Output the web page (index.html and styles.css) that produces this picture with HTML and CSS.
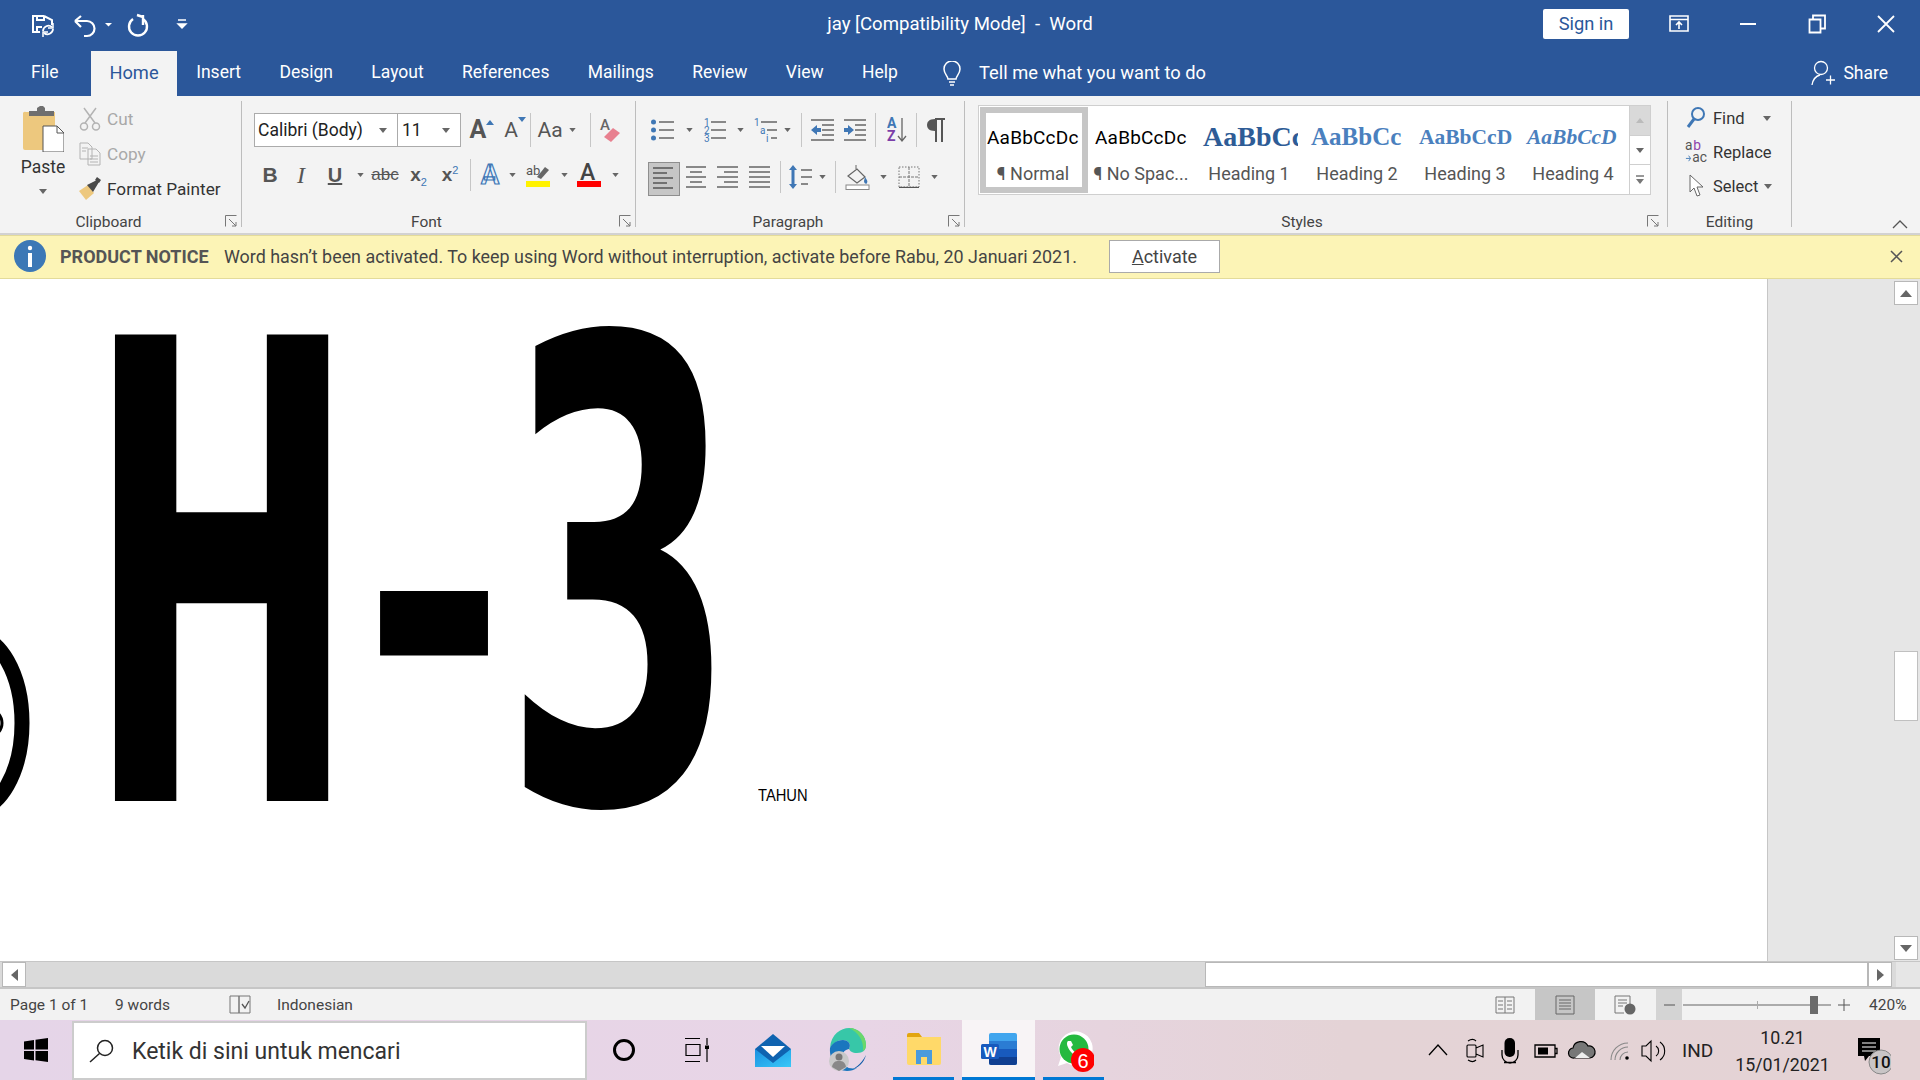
FILE: index.html
```html
<!DOCTYPE html>
<html lang="en">
<head>
<meta charset="utf-8">
<title>jay [Compatibility Mode] - Word</title>
<link rel="stylesheet" href="styles.css">
</head>
<body>
<div class="app">
  <header class="titlebar">
    <svg class="qat" width="200" height="48" viewBox="0 0 200 48" fill="none" stroke="#fff" stroke-width="2">
      <path d="M44 16H33v16h7M44 16l8 4v5M37 32v-5h5M37 16v4h7v-4"/>
      <path d="M43 31a5.500 5.500 0 0 1 9-4M53 29a5.500 5.500 0 0 1-9 4" stroke-width="1.800"/>
      <path d="M53 23v5h-5M43 37v-5h5" stroke-width="1.500"/>
      <path d="M75 21l6-5M75 21l6 6M75 21h12a7.500 7.500 0 0 1 0 15h-3" stroke-width="2.200"/>
      <path d="M105 23h7l-3.500 3.500z" fill="#fff" stroke="none"/>
      <path d="M133 19a9 9 0 1 0 10 0" stroke-width="2.400"/>
      <path d="M143 15v10M143 17l-6-2" stroke-width="2.400"/>
      <path d="M178 20h8M178 24h8l-4 4z" fill="#fff" stroke-width="1.400"/>
    </svg>
    <div class="doc-title">jay [Compatibility Mode]&nbsp; -&nbsp; Word</div>
    <div class="win-controls">
      <button class="signin">Sign in</button>
      <span class="win-btn"><svg width="22" height="20" viewBox="0 0 22 20" fill="none" stroke="#fff" stroke-width="1.600"><path d="M2 2h18v15H2zM2 5.500h18M11 15V8M8 11l3-3 3 3"/></svg></span>
      <span class="win-btn"><svg width="16" height="4" viewBox="0 0 16 4"><path d="M0 2h16" stroke="#fff" stroke-width="2"/></svg></span>
      <span class="win-btn"><svg width="18" height="20" viewBox="0 0 18 20" fill="none" stroke="#fff" stroke-width="1.800"><path d="M1.500 5.500h11v13h-11zM5 5V1.500h12v13h-4"/></svg></span>
      <span class="win-btn"><svg width="18" height="18" viewBox="0 0 18 18" stroke="#fff" stroke-width="1.800"><path d="M1 1l16 16M17 1L1 17"/></svg></span>
    </div>
  </header>

  <nav class="tabs">
    <span class="tab tab-file">File</span>
    <span class="tab active">Home</span>
    <span class="tab">Insert</span>
    <span class="tab">Design</span>
    <span class="tab">Layout</span>
    <span class="tab">References</span>
    <span class="tab">Mailings</span>
    <span class="tab">Review</span>
    <span class="tab">View</span>
    <span class="tab">Help</span>
    <svg class="bulb" width="20" height="26" viewBox="0 0 20 26" fill="none" stroke="#fff" stroke-width="1.500"><path d="M6 18c0-3-4-5-4-10a8 8 0 0 1 16 0c0 5-4 7-4 10zM7 21h6M8 24h4"/></svg>
    <span class="tellme">Tell me what you want to do</span>
    <span class="share">
      <svg width="24" height="26" viewBox="0 0 24 26" fill="none" stroke="#fff" stroke-width="1.300"><circle cx="10" cy="8" r="6.500"/><path d="M1 25c1-6 4-9 8-10M15 20h9M19.500 15.500v9"/></svg>
      Share
    </span>
  </nav>

  <section class="ribbon">
    <div class="group g-clip">
      <div class="g-body clip-body">
        <div class="paste">
          <svg width="41" height="46" viewBox="0 0 41 46"><path d="M3 6h29v38H2a2 2 0 0 1-2-2V8a2 2 0 0 1 3-2z" fill="#EDC87E"/><path d="M6 5h8V2l3-2h3l2 2v3h9v5H6z" fill="#6f6f6f"/><path d="M20 20h14l7 7v19H20z" fill="#fff" stroke="#555" stroke-width="1"/><path d="M34 20v7h7" fill="none" stroke="#555"/></svg>
          <span class="paste-label">Paste</span>
          <svg class="caret paste-caret" width="8" height="5" viewBox="0 0 8 5"><path d="M0 0h8L4 5z"/></svg>
        </div>
        <div class="clip-cmds">
          <div class="cmd disabled"><svg width="22" height="24" viewBox="0 0 22 24" fill="none" stroke="#b3b3b3" stroke-width="1.500"><path d="M5 1l11 15M17 1L6 16"/><circle cx="5" cy="19.500" r="3.500"/><circle cx="17" cy="19.500" r="3.500"/></svg><span>Cut</span></div>
          <div class="cmd disabled"><svg width="22" height="24" viewBox="0 0 22 24" fill="none" stroke="#b3b3b3" stroke-width="1"><path d="M1 1h8l4 4v12H1zM9 7h8l4 4v12H9zM3 6h6M3 9h4M11 14h8M11 17h8M11 20h8"/></svg><span>Copy</span></div>
          <div class="cmd"><svg width="24" height="24" viewBox="0 0 24 24"><path d="M1 14l9-6 6 8-8 7z" fill="#EDC87E"/><path d="M9 8l10-5 2 2-6 10z" fill="#4a4a4a"/><path d="M19 0l4 3-2 3-4-3z" fill="#4a4a4a"/></svg><span>Format Painter</span></div>
        </div>
      </div>
      <div class="g-label lab-clip"><span>Clipboard</span><svg class="launcher" width="12" height="12" viewBox="0 0 12 12" fill="none" stroke="#777"><path d="M.5 11.500v-11h11M4 4l7 7M11 7v4H7"/></svg></div>
    </div>

    <div class="group g-font">
      <div class="g-body">
        <div class="font-row1">
          <div class="combo combo-name"><span>Calibri (Body)</span><svg class="caret" width="8" height="5" viewBox="0 0 8 5"><path d="M0 0h8L4 5z"/></svg></div>
          <div class="combo combo-size"><span>11</span><svg class="caret" width="8" height="5" viewBox="0 0 8 5"><path d="M0 0h8L4 5z"/></svg></div>
          <div class="font-tools1">
            <span class="glyph sup-a big">A<svg class="sub-caret" width="8" height="5" viewBox="0 0 8 5"><path d="M0 5h8L4 0z"/></svg></span>
            <span class="glyph sup-a">A<svg class="sub-caret" width="8" height="5" viewBox="0 0 8 5"><path d="M0 0h8L4 5z"/></svg></span>
            <i class="vsep"></i>
            <span class="glyph aa">Aa</span>
            <svg class="caret" width="7" height="4" viewBox="0 0 8 5"><path d="M0 0h8L4 5z"/></svg>
            <i class="vsep sep-end"></i>
            <svg width="22" height="26" viewBox="0 0 22 26"><text class="svg-a" x="1" y="13">A</text><path d="M5 20l9-9 7 5-9 9z" fill="#E8808F"/></svg>
          </div>
        </div>
        <div class="font-row2">
          <b class="fmt">B</b>
          <i class="fmt ital">I</i>
          <u class="fmt ul">U</u>
          <svg class="caret" width="7" height="4" viewBox="0 0 8 5"><path d="M0 0h8L4 5z"/></svg>
          <s class="fmt abc">abc</s>
          <span class="fmt xs">x<sub>2</sub></span>
          <span class="fmt xs">x<sup>2</sup></span>
          <i class="vsep short"></i>
          <span class="fx-a">A</span>
          <svg class="caret" width="7" height="4" viewBox="0 0 8 5"><path d="M0 0h8L4 5z"/></svg>
          <svg width="24" height="24" viewBox="0 0 24 24"><text class="svg-ab" x="0" y="12">ab</text><path d="M11 14l8-10 4 3-8 9z" fill="#666"/><rect y="18" width="24" height="6" fill="#FFF200"/></svg>
          <svg class="caret" width="7" height="4" viewBox="0 0 8 5"><path d="M0 0h8L4 5z"/></svg>
          <svg width="24" height="24" viewBox="0 0 24 24"><text class="svg-bigA" x="3" y="17">A</text><rect y="18" width="24" height="6" fill="#F00"/></svg>
          <svg class="caret" width="7" height="4" viewBox="0 0 8 5"><path d="M0 0h8L4 5z"/></svg>
        </div>
      </div>
      <div class="g-label lab-font"><span>Font</span><svg class="launcher" width="12" height="12" viewBox="0 0 12 12" fill="none" stroke="#777"><path d="M.5 11.500v-11h11M4 4l7 7M11 7v4H7"/></svg></div>
    </div>

    <div class="group g-para">
      <div class="g-body">
        <div class="para-row1">
          <svg width="24" height="22" viewBox="0 0 24 22"><g fill="#3F77B5"><circle cx="2.500" cy="3" r="2.500"/><circle cx="2.500" cy="11" r="2.500"/><circle cx="2.500" cy="19" r="2.500"/></g><path d="M8 3h15M8 11h15M8 19h15" stroke="#666" stroke-width="1.300"/></svg>
          <svg class="caret" width="7" height="4" viewBox="0 0 8 5"><path d="M0 0h8L4 5z"/></svg>
          <svg width="24" height="24" viewBox="0 0 24 24"><text class="svg-num" x="1" y="8">1</text><text class="svg-num" x="1" y="16">2</text><text class="svg-num" x="1" y="24">3</text><path d="M8 4h15M8 12h15M8 20h15" stroke="#666" stroke-width="1.300"/></svg>
          <svg class="caret" width="7" height="4" viewBox="0 0 8 5"><path d="M0 0h8L4 5z"/></svg>
          <svg width="24" height="24" viewBox="0 0 24 24"><text class="svg-num" x="0" y="8">1</text><text class="svg-num" x="6" y="16">a</text><text class="svg-num" x="12" y="24">i</text><path d="M7 4h16M13 12h10M17 20h6" stroke="#666" stroke-width="1.300"/></svg>
          <svg class="caret" width="7" height="4" viewBox="0 0 8 5"><path d="M0 0h8L4 5z"/></svg>
          <i class="vsep"></i>
          <svg width="23" height="22" viewBox="0 0 23 22"><path d="M0 1h23M11 6h12M11 11h12M11 16h12M0 21h23" stroke="#666" stroke-width="1.300"/><path d="M0 11l6-5v3h4v4H6v3z" fill="#3F77B5"/></svg>
          <span></span>
          <svg width="22" height="22" viewBox="0 0 22 22"><path d="M0 1h22M11 6h11M11 11h11M11 16h11M0 21h22" stroke="#666" stroke-width="1.300"/><path d="M10 11L4 6v3H0v4h4v3z" fill="#3F77B5"/></svg>
          <i class="vsep"></i>
          <svg width="20" height="26" viewBox="0 0 20 26"><text class="svg-az1" x="0" y="11">A</text><text class="svg-az2" x="0" y="24">Z</text><path d="M15 1v22M11 19l4 5 4-5" fill="none" stroke="#666" stroke-width="1.300"/></svg>
          <i class="vsep"></i>
          <svg width="18" height="24" viewBox="0 0 18 24"><path d="M8 1C2 1 0 4 0 7s2 6 8 6V1z" fill="#555"/><path d="M8 1h10M9 1v23M15 1v23" stroke="#555" stroke-width="2" fill="none"/></svg>
        </div>
        <div class="para-row2">
          <span class="align-on"><svg width="22" height="22" viewBox="0 0 22 22"><path d="M0 1h20M0 6h14M0 11h20M0 16h14M0 21h20" stroke="#555" stroke-width="1.300"/></svg></span>
          <svg width="20" height="22" viewBox="0 0 20 22"><path d="M0 1h20M4 6h12M0 11h20M4 16h12M0 21h20" stroke="#666" stroke-width="1.300"/></svg>
          <svg width="21" height="22" viewBox="0 0 21 22"><path d="M0 1h21M7 6h14M0 11h21M7 16h14M0 21h21" stroke="#666" stroke-width="1.300"/></svg>
          <svg width="21" height="22" viewBox="0 0 21 22"><path d="M0 1h21M0 6h21M0 11h21M0 16h21M0 21h21" stroke="#666" stroke-width="1.300"/></svg>
          <i class="vsep short"></i>
          <svg width="23" height="26" viewBox="0 0 23 26"><path d="M4 1l4 5H5.500v14H8l-4 5-4-5h2.500V6H0z" fill="#3F77B5"/><path d="M12 6h11M12 13h11M12 20h7" stroke="#666" stroke-width="1.300"/></svg>
          <svg class="caret" width="7" height="4" viewBox="0 0 8 5"><path d="M0 0h8L4 5z"/></svg>
          <i class="vsep short"></i>
          <svg width="25" height="26" viewBox="0 0 25 26" fill="none"><path d="M3 12l9-7 8 8-8 6z" stroke="#666" stroke-width="1.200"/><path d="M11 5V1" stroke="#666"/><path d="M20 13c2 3 3 4 2 6s-3 0-3-2z" fill="#3F77B5"/><rect x="1" y="21" width="23" height="4.500" fill="#fff" stroke="#888"/></svg>
          <svg class="caret" width="7" height="4" viewBox="0 0 8 5"><path d="M0 0h8L4 5z"/></svg>
          <svg width="22" height="22" viewBox="0 0 22 22" fill="none" stroke="#777"><path d="M1 1h20v20H1z" stroke-dasharray="1.500 1.500"/><path d="M11 1v20M1 11h20" stroke-dasharray="3 1"/><path d="M1 21.500h20" stroke="#555" stroke-width="1.300"/></svg>
          <svg class="caret" width="7" height="4" viewBox="0 0 8 5"><path d="M0 0h8L4 5z"/></svg>
        </div>
      </div>
      <div class="g-label lab-para"><span>Paragraph</span><svg class="launcher" width="12" height="12" viewBox="0 0 12 12" fill="none" stroke="#777"><path d="M.5 11.500v-11h11M4 4l7 7M11 7v4H7"/></svg></div>
    </div>

    <div class="group g-styles">
      <div class="gallery">
        <div class="gallery-cells">
          <div class="style-cell on"><div class="pv pv-normal">AaBbCcDc</div><div class="pv-label">¶ Normal</div></div>
          <div class="style-cell"><div class="pv pv-normal">AaBbCcDc</div><div class="pv-label">¶ No Spac...</div></div>
          <div class="style-cell"><div class="pv pv-h1">AaBbCc</div><div class="pv-label">Heading 1</div></div>
          <div class="style-cell"><div class="pv pv-h2">AaBbCc</div><div class="pv-label">Heading 2</div></div>
          <div class="style-cell"><div class="pv pv-h3">AaBbCcD</div><div class="pv-label">Heading 3</div></div>
          <div class="style-cell"><div class="pv pv-h4">AaBbCcD</div><div class="pv-label">Heading 4</div></div>
        </div>
        <div class="gallery-scroll">
          <span class="gs gs-up"><svg width="8" height="5" viewBox="0 0 8 5"><path d="M0 5h8L4 0z" fill="#bbb"/></svg></span>
          <span class="gs"><svg class="caret" width="8" height="5" viewBox="0 0 8 5"><path d="M0 0h8L4 5z"/></svg></span>
          <span class="gs"><svg width="8" height="9" viewBox="0 0 8 9"><path d="M0 1h8" stroke="#777" stroke-width="1.500"/><path d="M0 4h8L4 9z" fill="#777"/></svg></span>
        </div>
      </div>
      <div class="g-label lab-styles"><span>Styles</span><svg class="launcher" width="12" height="12" viewBox="0 0 12 12" fill="none" stroke="#777"><path d="M.5 11.500v-11h11M4 4l7 7M11 7v4H7"/></svg></div>
    </div>

    <div class="group g-edit">
      <div class="g-body edit-body">
        <div class="ecmd"><svg width="20" height="24" viewBox="0 0 20 24" fill="none"><circle cx="12" cy="8" r="6" stroke="#3F77B5" stroke-width="2"/><path d="M8 13l-6 8" stroke="#3F77B5" stroke-width="3"/></svg><span>Find</span><svg class="caret find-caret" width="8" height="5" viewBox="0 0 8 5"><path d="M0 0h8L4 5z"/></svg></div>
        <div class="ecmd"><svg width="24" height="24" viewBox="0 0 24 24"><text class="svg-rep-a" x="0" y="10">a</text><text class="svg-rep-b" x="9" y="10">b</text><text class="svg-rep-a" x="8" y="23">ac</text><path d="M1 19h5M4 16l2 3-2 3" stroke="#3F77B5" fill="none"/></svg><span>Replace</span></div>
        <div class="ecmd"><svg width="20" height="24" viewBox="0 0 20 24"><path d="M4 1v17l4-4 3 8 3-1-3-8h6z" fill="#fff" stroke="#666"/></svg><span>Select</span><svg class="caret sel-caret" width="8" height="5" viewBox="0 0 8 5"><path d="M0 0h8L4 5z"/></svg></div>
      </div>
      <div class="g-label lab-edit"><span>Editing</span></div>
    </div>
    <svg class="collapse" width="16" height="10" viewBox="0 0 16 10" fill="none" stroke="#555" stroke-width="1.300"><path d="M1 9l7-7 7 7"/></svg>
  </section>

  <section class="notice">
    <svg class="info" width="32" height="32" viewBox="0 0 32 32"><circle cx="16" cy="16" r="16" fill="#3C78B6"/><circle cx="16" cy="8" r="2.200" fill="#fff"/><path d="M14 13h4v14h-4z" fill="#fff"/></svg>
    <strong>PRODUCT NOTICE</strong>
    <span class="msg">Word hasn’t been activated. To keep using Word without interruption, activate before Rabu, 20 Januari 2021.</span>
    <button class="activate"><u>A</u>ctivate</button>
    <svg class="notice-x" width="13" height="13" viewBox="0 0 13 13" stroke="#555" stroke-width="1.500"><path d="M1 1l11 11M12 1L1 12"/></svg>
  </section>

  <main class="workspace">
    <div class="page">
      <svg class="ring" width="40" height="200" viewBox="0 0 40 200" fill="none" stroke="#000"><ellipse cx="-28" cy="84" rx="50" ry="88" stroke-width="15"/><circle cx="-12" cy="84" r="14" stroke-width="3"/></svg>
      <div class="bigline">
        <span class="big big-h">H</span>
        <span class="big big-dash">-</span>
        <span class="big big-3">3</span>
        <span class="tahun">TAHUN</span>
      </div>
    </div>
    <div class="gutter"></div>
    <div class="vscroll">
      <span class="sbtn"><svg width="12" height="7" viewBox="0 0 12 7"><path d="M0 7h12L6 0z" fill="#666"/></svg></span>
      <span class="vthumb"></span>
      <span class="sbtn"><svg width="12" height="7" viewBox="0 0 12 7"><path d="M0 0h12L6 7z" fill="#666"/></svg></span>
    </div>
  </main>

  <div class="hscroll">
    <span class="hbtn"><svg width="7" height="12" viewBox="0 0 7 12"><path d="M7 0v12L0 6z" fill="#666"/></svg></span>
    <span class="hthumb"></span>
    <span class="hbtn"><svg width="7" height="12" viewBox="0 0 7 12"><path d="M0 0v12l7-6z" fill="#666"/></svg></span>
  </div>

  <footer class="status">
    <span class="st-page">Page 1 of 1</span>
    <span class="st-words">9 words</span>
    <svg class="st-proof" width="22" height="20" viewBox="0 0 22 20" fill="none" stroke="#777"><path d="M1 1h9v17H1zM10 18V1h11v17H10"/><path d="M13 9l3 4 4-7" stroke="#555" stroke-width="1.300"/></svg>
    <span class="st-lang">Indonesian</span>
    <div class="st-right">
      <span class="vw"><svg width="20" height="20" viewBox="0 0 20 20" fill="none" stroke="#777"><path d="M1 2h18v16H1zM10 2v16M3 6h5M3 10h5M3 14h5M12 6h5M12 10h5M12 14h5"/></svg></span>
      <span class="vw vw-on"><svg width="20" height="20" viewBox="0 0 20 20" fill="none" stroke="#666"><path d="M1 1h18v18H1zM4 5h12M4 8h12M4 11h12M4 14h12"/></svg></span>
      <span class="vw"><svg width="22" height="20" viewBox="0 0 22 20" fill="none" stroke="#777"><path d="M10 18H1V1h15v8M4 5h9M4 8h9M4 11h5"/><circle cx="16" cy="14" r="5.500" fill="#666" stroke="none"/></svg></span>
      <span class="zm-minus"><svg width="11" height="2" viewBox="0 0 11 2"><path d="M0 1h11" stroke="#555"/></svg></span>
      <div class="slider"><i class="tick"></i><i class="knob"></i></div>
      <svg class="zm-plus" width="12" height="12" viewBox="0 0 12 12" stroke="#555"><path d="M0 6h12M6 0v12"/></svg>
      <span class="zm-val">420%</span>
    </div>
  </footer>

  <footer class="taskbar">
    <span class="start"><svg width="24" height="24" viewBox="0 0 24 24"><path d="M0 3.500l10-1.500v9.500H0zM11.500 1.800L24 0v11.500H11.500zM0 13h10v9.500l-10-1.500zM11.500 13H24v11l-12.500-1.800z" fill="#000"/></svg></span>
    <div class="search">
      <svg width="26" height="24" viewBox="0 0 26 24" fill="none" stroke="#222" stroke-width="1.500"><circle cx="16" cy="9" r="7.500"/><path d="M10.500 14.500L1 23"/></svg>
      <span>Ketik di sini untuk mencari</span>
    </div>
    <span class="tb tb-cortana"><svg width="24" height="24" viewBox="0 0 24 24" fill="none" stroke="#000" stroke-width="3"><circle cx="12" cy="12" r="9.500"/></svg></span>
    <span class="tb tb-task"><svg width="24" height="24" viewBox="0 0 24 24" fill="none" stroke="#000" stroke-width="1.200"><path d="M0 .5h15M1 6.500h14v11H1zM0 23.500h15M22 0v7M22 11v13"/><rect x="20" y="7.500" width="4" height="3.500" fill="#000" stroke="none"/></svg></span>
    <span class="tb tb-mail"><svg width="36" height="33" viewBox="0 0 36 33"><defs><linearGradient id="mg" x1="0" y1="0" x2="1" y2="1"><stop offset="0" stop-color="#1A8FE0"/><stop offset="1" stop-color="#38C8F8"/></linearGradient></defs><path d="M0 15L18 0l18 15v18H0z" fill="#0F63B0"/><path d="M6 12h24L18 23z" fill="#fff"/><path d="M0 15l18 14 18-14v18H0z" fill="url(#mg)"/></svg></span>
    <span class="tb tb-edge"><svg width="38" height="44" viewBox="0 0 38 44"><path d="M1 20C2 6 12 0 20 0c10 0 17 8 17 17 0 5-3 8-9 8-5 0-7-2-8-4 3-6-2-9-6-9-7 0-11 5-13 8z" fill="#37C7A8"/><path d="M20 0c10 0 17 8 17 17 0 3-1 5-3 6C35 12 29 4 20 0z" fill="#6BD76B"/><path d="M1 20c2-4 6-8 13-8 4 0 9 3 6 9-5 1-8 5-7 11 1 6 7 10 15 8-3 2-6 3-10 3C8 43 0 32 1 20z" fill="#1A76BE"/><path d="M37 27c-2 8-8 13-15 15 2-1 10-5 15-15z" fill="#0D5AA8"/><circle cx="10" cy="33" r="10" fill="#c9c9c9"/><circle cx="10" cy="29" r="3.500" fill="#777"/><path d="M3 39c1-5 3-6 7-6s6 1 7 6l-7 4z" fill="#888"/></svg></span>
    <span class="tb tb-files"><svg width="34" height="32" viewBox="0 0 34 32"><path d="M0 2a2 2 0 0 1 2-2h10l3 4h17a2 2 0 0 1 2 2v4H0z" fill="#E2A50F"/><path d="M0 4h34v26a2 2 0 0 1-2 2H2a2 2 0 0 1-2-2z" fill="#FFD969"/><path d="M9 31V17h16v14h-5v-7h-6v7z" fill="#4A9BDD"/></svg></span>
    <span class="tb tb-word"><svg width="36" height="32" viewBox="0 0 36 32"><rect x="8" y="0" width="28" height="32" rx="2" fill="#41A5EE"/><rect x="8" y="8" width="28" height="8" fill="#2B7CD3"/><rect x="8" y="16" width="28" height="8" fill="#185ABD"/><path d="M8 24h28v6a2 2 0 0 1-2 2H10a2 2 0 0 1-2-2z" fill="#103F91"/><rect x="0" y="11" width="18" height="15" rx="1.500" fill="#185ABD"/><text class="svg-w" x="2.500" y="23.500">W</text></svg></span>
    <span class="tb tb-wa"><svg width="40" height="46" viewBox="0 0 40 46"><path d="M4 40l3-9a17 17 0 1 1 6 6z" fill="#fff"/><circle cx="20" cy="23" r="14.500" fill="#25B93F"/><path d="M14 15c-2 2-1 6 3 11s9 6 11 4l1-3-4-2-2 2c-3-1-5-4-6-6l2-2-2-4z" fill="#fff"/><circle cx="29" cy="34" r="12" fill="#F00"/><text class="svg-badge" x="29" y="41.500">6</text></svg></span>
    <div class="tray">
      <svg class="tray-strip" width="250" height="34" viewBox="0 0 250 34" fill="none" stroke="#000">
        <path d="M7 22l9-10 9 10" stroke-width="1.300"/>
        <path d="M46 12h7a1 1 0 0 1 1 1v10a1 1 0 0 1-1 1h-7a1 1 0 0 1-1-1V13a1 1 0 0 1 1-1zM54 15l7-3v12l-7-3" stroke-width="1.100"/>
        <path d="M46 8c3-2 6-2 8 0M46 27c3 2 6 2 8 0" stroke-width="1.100"/>
        <rect x="82.500" y="5" width="10.500" height="19" rx="5" fill="#000" stroke="none"/>
        <path d="M80 17v5a8 8 0 0 0 16 0v-5M88 30v-1M82 29.500h12" stroke-width="1.300"/>
        <path d="M113 12h20v12h-20zM133 15.500h2v5h-2" stroke-width="1.300"/>
        <rect x="116" y="14.500" width="10" height="7" fill="#000" stroke="none"/>
        <path d="M152 25a5 5 0 0 1-1-10 8 8 0 0 1 15-2 6 6 0 0 1 2 12z" fill="#777" stroke="#000" stroke-width="1.200"/>
        <path d="M153 25l7-6 8 6z" fill="#eee" stroke="none"/>
        <path d="M189 27a17 17 0 0 1 17-17M193 27a13 13 0 0 1 13-13M198 27a8 8 0 0 1 8-8" stroke="#888" stroke-width="1.100"/>
        <circle cx="205" cy="25" r="1.800" fill="#000" stroke="none"/>
        <path d="M220 13h4l5-5v20l-5-5h-4zM234 13a6 6 0 0 1 0 10M238 9a11 11 0 0 1 0 18" stroke-width="1.100"/>
      </svg>
      <span class="tray-lang">IND</span>
      <div class="clock"><span>10.21</span><span>15/01/2021</span></div>
      <svg class="notif" width="36" height="44" viewBox="0 0 36 44"><path d="M3 7h22v18H14l-4 5-1-5H3z" fill="#000"/><path d="M7 12h14M7 16h14M7 20h14" stroke="#fff" stroke-width="1.200"/><circle cx="26" cy="31" r="12" fill="#c9c5c6" stroke="#888"/><text class="svg-ten" x="26" y="37">10</text></svg>
    </div>
  </footer>
</div>
</body>
</html>
```

FILE: styles.css
```css
* { box-sizing: border-box; }
html, body { margin: 0; padding: 0; width: 100%; height: 100%; overflow: hidden; }
body { font-family: Roboto, "Noto Sans", "Liberation Sans", sans-serif; color: #444; }
svg { display: block; flex: none; }
i { font-style: normal; }
.app { width: 1920px; height: 1080px; display: flex; flex-direction: column; background: #fff; }

/* title bar */
.titlebar { height: 48px; background: #2B579A; display: grid; grid-template-columns: 1fr auto 1fr; align-items: center; color: #fff; flex: none; }
.doc-title { font-size: 18.600px; }
.win-controls { display: flex; justify-content: flex-end; align-items: center; }
.signin { width: 86px; height: 30px; margin-right: 15px; border: 0; border-radius: 2px; background: #fff; color: #2B579A; font: 18.300px Roboto, sans-serif; padding: 0 0 2px; }
.win-btn { width: 69px; height: 48px; display: flex; align-items: center; justify-content: center; }

/* tabs */
.tabs { height: 48px; background: #2B579A; display: flex; flex: none; color: #fff; font-size: 17.500px; align-items: flex-end; }
.tab { height: 45px; line-height: 43px; padding: 0 19.200px; }
.tab-file { padding: 0 20px 0 31px; width: 91px; }
.tab.active { background: #F3F3F3; color: #2B579A; width: 86px; text-align: center; padding: 0; font-size: 18.300px; }
.bulb { margin: 0 0 9px 25px; }
.tellme { height: 45px; line-height: 43px; margin-left: 17px; font-size: 18.300px; }
.share { margin-left: auto; margin-right: 32px; height: 45px; padding-bottom: 2px; display: flex; align-items: center; gap: 8px; }

/* ribbon */
.ribbon { height: 139px; flex: none; background: #F3F3F3; border-bottom: 2px solid #D2D2D2; display: flex; position: relative; }
.group { margin-top: 5px; height: 126px; display: flex; flex-direction: column; border-right: 1px solid #BDBDBD; flex: none; }
.g-body { height: 112px; flex: none; }
.g-label { height: 14px; line-height: 18px; font-size: 15.500px; color: #444; display: flex; }
.g-label span { flex: 1; text-align: center; }
.launcher { margin: 2px 4px 0 0; }
.caret { fill: #666; }
.vsep { display: block; width: 1px; height: 34px; background: #C6C6C6; }
.vsep.short { height: 32px; }
.cmd, .ecmd, .pv-label { white-space: nowrap; }

.g-clip { width: 242px; }
.clip-body { display: flex; }
.paste { margin-left: 4px; display: flex; flex-direction: column; align-items: center; padding-top: 5px; width: 78px; }
.paste-label { font-size: 17.500px; line-height: 20px; margin-top: 5px; color: #333; }
.paste-caret { margin-top: 12px; }
.clip-cmds { margin-left: -4px; }
.cmd { height: 35px; display: flex; align-items: center; gap: 5px; font-size: 17.200px; color: #333; }
.cmd svg { width: 24px; }
.cmd.disabled { color: #A8A8A8; }
.lab-clip span { padding-right: 8px; }

.g-font { width: 394px; }
.font-row1 { display: flex; margin: 12px 0 0 12px; height: 34px; align-items: center; }
.combo { height: 34px; border: 1px solid #ABABAB; background: #fff; display: flex; align-items: center; justify-content: space-between; font-size: 17.500px; color: #222; padding: 0 10px 0 3px; }
.combo-name { width: 144px; }
.combo-size { width: 64px; margin-left: -1px; padding-left: 4px; }
.font-tools1 { display: grid; grid-template-columns: 34px 32px 6px 34px 10px 14px 38px; justify-items: center; align-items: center; height: 34px; }
.glyph { position: relative; font-size: 21px; color: #555; line-height: 26px; }
.glyph.big { font-size: 25px; }
.glyph.aa { font-size: 21px; }
.sub-caret { position: absolute; right: -8px; top: 0; fill: #3F77B5; }
.sep-end { justify-self: end; }
.font-row2 { display: grid; grid-template-columns: 32px 30px 38px 12px 38px 29px 34px 6px 34px 10px 42px 10px 40px 12px; justify-items: center; align-items: center; margin: 11px 0 0 12px; height: 34px; }
.fmt { font-size: 20px; color: #555; line-height: 24px; font-family: "Liberation Sans", sans-serif; }
b.fmt { font-weight: 700; font-size: 21px; }
.ital { font-style: italic; font-family: "Liberation Serif", serif; font-size: 24px; font-weight: 400; }
.ul { font-weight: 700; }
.abc { font-size: 17px; }
.xs { font-weight: 700; font-size: 19px; }
.xs sub, .xs sup { font-size: 11px; font-weight: 400; color: #3F77B5; line-height: 0; }
.fx-a { font-size: 27px; font-weight: 700; line-height: 28px; color: #E8F1FA; -webkit-text-stroke: 1.200px #3F77B5; }
.svg-a { font: 500 15px Roboto, sans-serif; fill: #666; }
.svg-ab { font: 13px Roboto, sans-serif; fill: #555; }
.svg-bigA { font: 500 23px Roboto, sans-serif; fill: #444; }
.svg-num { font: 10px Roboto, sans-serif; fill: #3F77B5; }
.svg-az1 { font: 700 14px Roboto, sans-serif; fill: #3F77B5; }
.svg-az2 { font: 700 14px Roboto, sans-serif; fill: #7B3FA8; }
.svg-rep-a { font: 15px Roboto, sans-serif; fill: #555; }
.svg-rep-b { font: 15px Roboto, sans-serif; fill: #8E44AD; }

.g-para { width: 329px; }
.para-row1 { display: grid; grid-template-columns: 30px 22px 30px 20px 32px 10px 19px 23px 10px 22px 18px 26px 12px 28px; justify-items: center; align-items: center; margin: 12px 0 0 12px; height: 34px; }
.para-row2 { display: grid; grid-template-columns: 32px 32px 31px 33px 8px 33px 10px 16px 29px 22px 29px 22px; justify-items: center; align-items: center; margin: 11px 0 0 12px; height: 34px; }
.align-on { width: 32px; height: 34px; margin-top: 4px; background: #C6C6C6; border: 1px solid #8E8E8E; display: flex; justify-content: center; padding-top: 4px; }
.lab-font span { padding-right: 8px; }
.lab-para span { padding-right: 8px; }

.g-styles { width: 703px; }
.gallery { margin: 4px 0 0 13px; width: 673px; height: 90px; border: 1px solid #CFCFCF; background: #fff; display: flex; flex: none; }
.gallery-cells { display: flex; flex: 1; min-width: 0; overflow: hidden; padding: 1px 0 0 1px; }
.style-cell { width: 108px; height: 86px; flex: none; }
.style-cell.on { box-shadow: inset 0 0 0 6px #C6C6C6; }
.pv { height: 59px; padding-left: 7px; white-space: nowrap; overflow: hidden; margin-right: 6px; color: #000; }
.pv-normal { font-size: 19px; line-height: 62px; letter-spacing: .2px; }
.pv-h1 { font: 700 28px/60px "Liberation Serif", serif; color: #2E5C96; }
.pv-h2 { font: 700 25px/60px "Liberation Serif", serif; color: #4A80BE; }
.pv-h3 { font: 700 21.500px/60px "Liberation Serif", serif; color: #4A80BE; }
.pv-h4 { font: italic 700 21.500px/60px "Liberation Serif", serif; color: #4A80BE; }
.pv-label { text-align: center; font-size: 18px; line-height: 16px; color: #555; margin-right: 2px; }
.gallery-scroll { width: 22px; flex: none; display: flex; flex-direction: column; border-left: 1px solid #CFCFCF; margin: -1px -1px -1px 0; }
.gs { flex: 1; display: flex; align-items: center; justify-content: center; border: 1px solid #CFCFCF; border-left: 0; margin-top: -1px; }
.gs-up { background: #D9D9D9; margin-top: 0; }
.lab-styles { margin-top: 18px; padding-right: 4px; }
.lab-styles span { padding-right: 8px; }

.g-edit { width: 124px; }
.ecmd { height: 34px; display: flex; align-items: center; font-size: 16.500px; color: #333; padding-left: 17px; gap: 6px; }
.ecmd svg:first-child { width: 22px; }
.find-caret { margin-left: 12px; }
.sel-caret { margin-left: 0; }
.collapse { position: absolute; right: 12px; bottom: 4px; }

/* notice */
.notice { height: 44px; flex: none; background: #FCF4B6; border-bottom: 1px solid #E3DB9A; border-top: 1px solid #E3DB9A; display: flex; align-items: center; font-size: 17.900px; color: #444; padding: 0 0 2px 14px; }
.notice strong { margin-left: 14px; font-weight: 700; font-size: 18px; width: 150px; white-space: nowrap; color: #555; }
.msg { margin-left: 14px; width: 885px; white-space: nowrap; }
.activate { width: 111px; height: 33px; background: #fff; border: 1px solid #AAA; font: 18px Roboto, sans-serif; color: #444; padding: 0; }
.notice-x { margin-left: auto; margin-right: 17px; }

/* document */
.workspace { height: 682px; flex: none; display: flex; overflow: hidden; }
.page { width: 1768px; flex: none; background: #fff; position: relative; overflow: hidden; border-right: 1px solid #C6C6C6; padding-top: 45px; }
.ring { position: absolute; left: 0; top: 360px; }
.bigline { display: flex; align-items: baseline; margin-left: 85px; color: #000; font-family: "DejaVu Sans", sans-serif; }
.big { display: block; font-weight: 700; font-size: 640px; line-height: .8; transform-origin: 0 100%; flex: none; }
.big-h { width: 276px; transform: scaleX(.51); }
.big-dash { width: 141px; font-size: 454px; transform: translateY(-47px) scaleX(.775); }
.big-3 { width: 256px; transform: scaleX(.531); }
.tahun { font-family: "Liberation Sans", sans-serif; font-size: 16px; transform: scaleX(.92); transform-origin: 0 100%; white-space: nowrap; }
.gutter { width: 126px; flex: none; background: #E6E6E6; }
.vscroll { width: 26px; flex: none; background: #E6E6E6; display: flex; flex-direction: column; position: relative; }
.sbtn { width: 24px; height: 24px; margin-top: 2px; background: #fff; border: 1px solid #B8B8B8; display: flex; align-items: center; justify-content: center; flex: none; }
.vthumb { width: 24px; height: 70px; background: #fff; border: 1px solid #C0C0C0; margin-top: 346px; flex: none; }
.sbtn:last-child { margin-top: auto; margin-bottom: 1px; }

.hscroll { height: 26px; flex: none; display: flex; background: #DADADA; border-top: 1px solid #C6C6C6; padding-left: 2px; }
.hbtn { width: 24px; height: 25px; background: #fff; border: 1px solid #B8B8B8; display: flex; align-items: center; justify-content: center; flex: none; }
.hthumb { margin-left: 1179px; width: 663px; height: 25px; background: #fff; border: 1px solid #B8B8B8; flex: none; }
.hscroll .hbtn:last-child { margin-right: 0; box-shadow: 28px 0 0 #E6E6E6; }

/* status bar */
.status { height: 33px; flex: none; background: #F2F2F2; border-top: 2px solid #C6C6C6; display: flex; align-items: center; font-size: 15.500px; color: #444; }
.st-page { margin-left: 10px; width: 105px; }
.st-words { width: 114px; }
.st-proof { margin-right: 26px; }
.st-right { margin-left: auto; display: flex; align-items: center; height: 100%; }
.vw { width: 60px; height: 100%; display: flex; align-items: center; justify-content: center; }
.vw-on { background: #C6C6C6; }
.zm-minus { width: 26px; height: 100%; background: #D4D4D4; display: flex; align-items: center; justify-content: center; margin-left: 1px; }
.slider { width: 148px; height: 2px; background: #ABABAB; margin-left: 1px; position: relative; }
.tick { position: absolute; left: 74px; top: -3px; width: 1px; height: 8px; background: #ABABAB; }
.knob { position: absolute; left: 127px; top: -8px; width: 8px; height: 18px; background: #6B6B6B; }
.zm-plus { margin-left: 7px; }
.zm-val { margin: 0 11px 0 19px; width: 40px; }

/* taskbar */
.taskbar { height: 60px; flex: none; background: linear-gradient(90deg, #E5D5E8 0%, #E8D5E6 45%, #E4D3D6 70%, #E4D3D5 100%); display: flex; align-items: stretch; }
.start { width: 72px; display: flex; align-items: center; justify-content: center; }
.search { width: 515px; background: #fff; border: 2px solid #CCC; display: flex; align-items: center; padding: 2px 0 0 15px; gap: 17px; font-size: 23px; color: #333; white-space: nowrap; margin-top: 1px; }
.search svg { margin-top: -2px; }
.tb { display: flex; align-items: center; justify-content: center; flex: none; height: 60px; }
.tb-cortana { width: 74px; }
.tb-task { width: 71px; }
.tb-mail { width: 82px; }
.tb-edge { width: 68px; }
.tb-files, .tb-wa { width: 61px; border-bottom: 3px solid #0078D4; }
.tb-files { margin-left: 11px; }
.tb-word { width: 73px; margin-left: 8px; background: #F8F4F6; border-bottom: 3px solid #0078D4; }
.tb-wa { margin-left: 8px; }
.svg-w { font: 700 14px "Liberation Sans", sans-serif; fill: #fff; }
.svg-badge { font: 20px "Liberation Sans", sans-serif; fill: #fff; text-anchor: middle; }
.svg-ten { font: 500 17px Roboto, sans-serif; fill: #111; text-anchor: middle; }
.tray { margin-left: auto; display: flex; align-items: center; }
.tray-lang { font-size: 19px; color: #222; margin-left: 10px; width: 35px; }
.clock { width: 125px; margin: 1px 0 0 3px; display: flex; flex-direction: column; align-items: center; font-size: 17.800px; line-height: 27px; color: #222; }
.notif { margin: 6px 29px 0 10px; }
```
